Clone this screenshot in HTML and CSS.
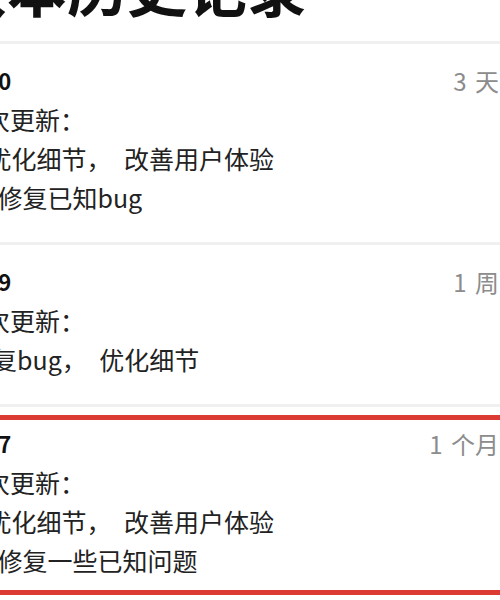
FILE: index.html
```html
<!DOCTYPE html>
<html lang="zh-CN">
<head>
    <meta charset="UTF-8">
    <meta name="viewport" content="width=device-width, initial-scale=1.0">
    <title>版本历史记录</title>
    <link rel="stylesheet" href="styles.css">
</head>
<body>
    <div class="page">
        <h1 class="title">版本历史记录</h1>

        <ul class="list">
            <li class="item">
                <div class="head">
                    <span class="ver">1.1.0</span>
                    <span class="time">3 天前</span>
                </div>
                <p class="line">本次更新：</p>
                <p class="line">1. 优化细节，&ensp;改善用户体验</p>
                <p class="line wide">2. 修复已知bug</p>
            </li>
            <li class="item">
                <div class="head">
                    <span class="ver">1.0.9</span>
                    <span class="time">1 周前</span>
                </div>
                <p class="line">本次更新：</p>
                <p class="line single">修复bug，&ensp;优化细节</p>
            </li>
            <li class="item marked">
                <div class="head">
                    <span class="ver">1.0.7</span>
                    <span class="time">1 个月前</span>
                </div>
                <p class="line">本次更新：</p>
                <p class="line">1. 优化细节，&ensp;改善用户体验</p>
                <p class="line wide">2. 修复一些已知问题</p>
            </li>
        </ul>
    </div>
</body>
</html>
```

FILE: styles.css
```css
body {
    margin: 0;
    overflow: hidden;
    background: #fff;
    font-family: "Noto Sans CJK SC", sans-serif;
}

/* the shot is cropped, so the page runs past both edges */
.page {
    width: 563px;
    margin-left: -40px;
}

.title {
    margin: -44px 0 25px -13px;
    font-size: 60px;
    line-height: 60px;
    font-weight: 700;
    color: #111;
}

.list {
    list-style: none;
    margin: 0;
    padding: 0;
}

.item {
    position: relative;
    border-top: 3px solid #f0f0f0;
    padding: 16px 0 25px;
}

.head {
    display: flex;
    justify-content: space-between;
    align-items: center;
    height: 40px;
}

.ver {
    font-size: 22px;
    font-weight: 700;
    letter-spacing: -0.5px;
    color: #111;
}

.time {
    font-size: 24px;
    word-spacing: 3px;
    color: #8c8c8c;
}

.line {
    margin: 0;
    font-size: 25px;
    line-height: 39px;
    color: #222;
}

.wide {
    padding-left: 11px;
}

.single {
    padding-left: 7px;
}

/* red highlight frame drawn over the last entry */
.marked::after {
    content: "";
    position: absolute;
    left: 23px;
    right: -20px;
    top: 8px;
    height: 180px;
    border: 5px solid #dc3b33;
    box-sizing: border-box;
}
```
